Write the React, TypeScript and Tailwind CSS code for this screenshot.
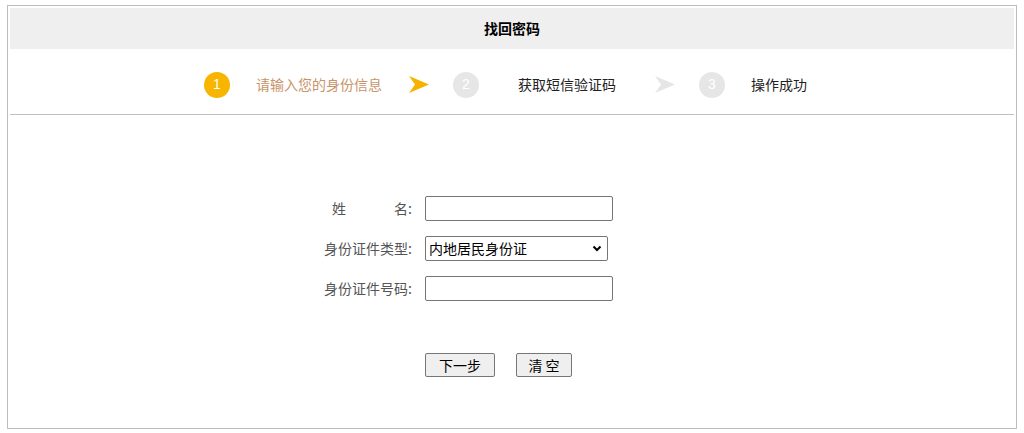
import React from 'react';

const font = { fontFamily: '"Noto Sans CJK SC", "Liberation Sans", sans-serif' };

const Arrow: React.FC<{ color: string }> = ({ color }) => (
  <svg width="20" height="17" viewBox="0 0 20 17" className="shrink-0">
    <polygon points="0,0 20,8.5 0,17 6,8.5" fill={color} />
  </svg>
);

const Circle: React.FC<{ n: number; active?: boolean }> = ({ n, active }) => (
  <div
    className={`w-[26px] h-[26px] rounded-full flex items-center justify-center shrink-0 text-white text-[14px] font-['Liberation_Sans'] ${
      active ? 'bg-[#f7b500]' : 'bg-[#e6e6e6]'
    }`}
  >
    {n}
  </div>
);

const App: React.FC = () => {
  return (
    <div className="bg-white w-[1024px] h-[433px] pt-[5px] pl-[7px]" style={font}>
      <div className="w-[1010px] h-[424px] border border-[#bdbdbd] p-[2px]">
        {/* title bar */}
        <div className="h-[41px] bg-[#efefef] flex items-center justify-center text-[14px] font-bold text-black">
          找回密码
        </div>

        {/* steps */}
        <div className="h-[66px] border-b border-[#c0c0c0] flex items-center pt-[6px] pl-[194px] text-[14px]">
          <Circle n={1} active />
          <span className="ml-[26px] text-[#c8946a]">请输入您的身份信息</span>
          <div className="ml-[27px]">
            <Arrow color="#f5b300" />
          </div>
          <div className="ml-[24px]">
            <Circle n={2} />
          </div>
          <span className="ml-[39px] text-[#222]">获取短信验证码</span>
          <div className="ml-[39px]">
            <Arrow color="#e6e6e6" />
          </div>
          <div className="ml-[24px]">
            <Circle n={3} />
          </div>
          <span className="ml-[26px] text-[#222]">操作成功</span>
        </div>

        {/* form */}
        <div className="pt-[81px] text-[14px] text-[#555]">
          <div className="flex flex-col gap-[15px]">
            <div className="flex items-center h-[25px]">
              <div className="w-[415px] flex justify-end pr-[13px]">
                <span>姓</span>
                <span className="ml-[48px]">名:</span>
              </div>
              <input className="w-[188px] h-[25px] border border-[#767676] rounded-[2px] px-1 bg-white outline-none" />
            </div>
            <div className="flex items-center h-[25px]">
              <div className="w-[415px] text-right pr-[13px]">身份证件类型:</div>
              <div className="relative w-[183px] h-[25px]">
                <select className="appearance-none w-full h-full border border-[#767676] rounded-[2px] pl-[3px] bg-white text-black outline-none">
                  <option>内地居民身份证</option>
                  <option>港澳居民来往内地通行证</option>
                  <option>护照</option>
                </select>
                <svg
                  width="10"
                  height="7"
                  viewBox="0 0 10 7"
                  className="absolute right-[6px] top-[9px] pointer-events-none"
                >
                  <polyline points="1.5,1.5 5,5 8.5,1.5" fill="none" stroke="#000" strokeWidth="2" />
                </svg>
              </div>
            </div>
            <div className="flex items-center h-[25px]">
              <div className="w-[415px] text-right pr-[13px]">身份证件号码:</div>
              <input className="w-[188px] h-[25px] border border-[#767676] rounded-[2px] px-1 bg-white outline-none" />
            </div>
          </div>

          <div className="flex pl-[415px] gap-[21px] mt-[52px]">
            <button className="w-[70px] h-[24px] bg-[#efefef] border border-[#767676] rounded-[2px] text-[14px] text-black">
              下一步
            </button>
            <button className="w-[56px] h-[24px] bg-[#efefef] border border-[#767676] rounded-[2px] text-[14px] text-black">
              清 空
            </button>
          </div>
        </div>
      </div>
    </div>
  );
};

export default App;
